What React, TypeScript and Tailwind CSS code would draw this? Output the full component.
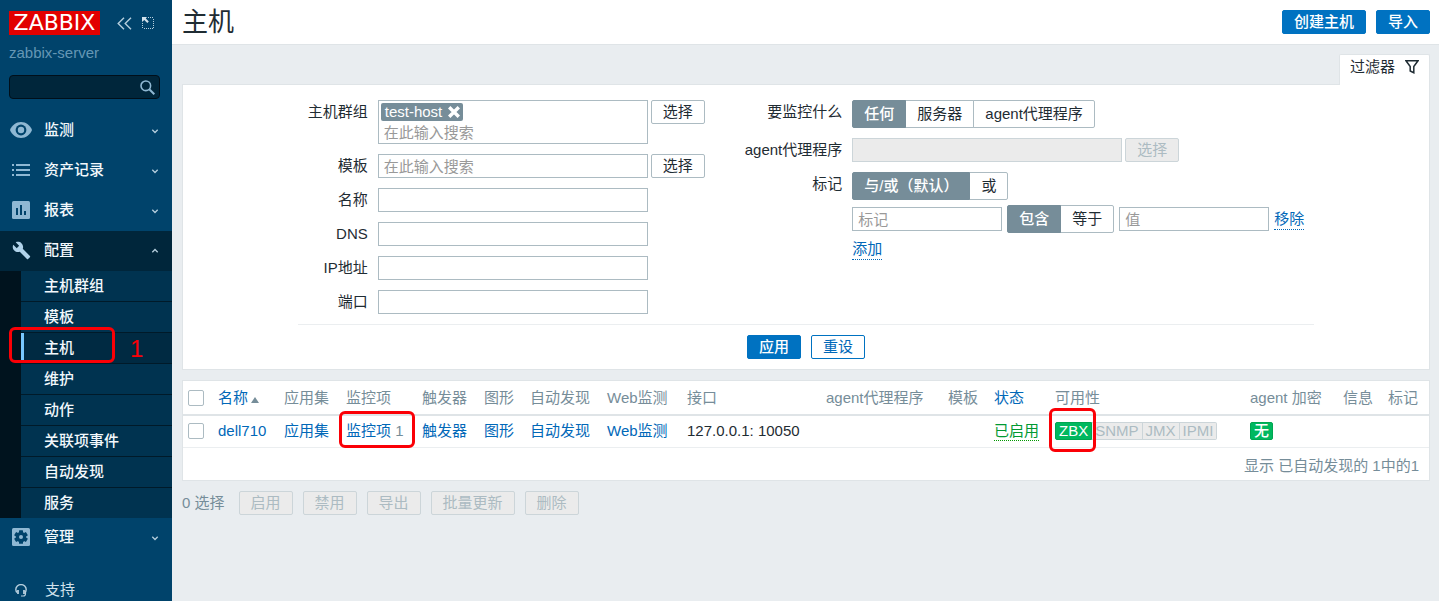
import { useState } from 'react'
import type { ReactNode } from 'react'

const subMenu = ['主机群组', '模板', '主机', '维护', '动作', '关联项事件', '自动发现', '服务']

const columns = [
  { label: '名称', width: 'w-[66px]', sort: true },
  { label: '应用集', width: 'w-[62px]' },
  { label: '监控项', width: 'w-[76px]' },
  { label: '触发器', width: 'w-[62px]' },
  { label: '图形', width: 'w-[46px]' },
  { label: '自动发现', width: 'w-[77px]' },
  { label: 'Web监测', width: 'w-[80px]' },
  { label: '接口', width: '' },
  { label: 'agent代理程序', width: 'w-[122px]' },
  { label: '模板', width: 'w-[46px]' },
  { label: '状态', width: 'w-[61px]', link: true },
  { label: '可用性', width: 'w-[195px]' },
  { label: 'agent 加密', width: 'w-[93px]' },
  { label: '信息', width: 'w-[45px]' },
  { label: '标记', width: 'w-[49px]' },
]

const fieldClass = 'h-6 border border-[#acbbc2] bg-white px-[5px] outline-none placeholder:text-[#999] placeholder:opacity-100'
const linkClass = 'text-[#0168b8]'

function EyeIcon() {
  return (
    <svg width="22" height="16" viewBox="0 0 22 16" fill="none">
      <path d="M11 0C6 0 1.800 3.300 0 8c1.800 4.700 6 8 11 8s9.200-3.300 11-8C20.200 3.300 16 0 11 0z" fill="#8fb8d3" />
      <circle cx="11" cy="8" r="5.400" fill="#00436b" />
      <circle cx="11" cy="8" r="3.200" fill="#8fb8d3" />
    </svg>
  )
}

function ListIcon() {
  return (
    <svg width="18" height="12" viewBox="0 0 18 12" fill="#8fb8d3">
      <path d="M0 0h2v2H0zM4 0h14v2H4zM0 5h2v2H0zM4 5h14v2H4zM0 10h2v2H0zM4 10h14v2H4z" />
    </svg>
  )
}

function ReportIcon() {
  return (
    <svg width="18" height="18" viewBox="0 0 18 18">
      <rect width="18" height="18" rx="1.500" fill="#8fb8d3" />
      <path d="M4 7h2v7H4zM8 4h2v10H8zM12 10h2v4h-2z" fill="#00436b" />
    </svg>
  )
}

function WrenchIcon() {
  return (
    <svg width="19" height="19" viewBox="0 0 24 24" fill="#b0d3ea">
      <path d="M22.700 19l-9.100-9.100c.9-2.300.4-5-1.500-6.900-2-2-5-2.400-7.400-1.300L9 6 6 9 1.600 4.700C.4 7.100.9 10.100 2.900 12.100c1.900 1.900 4.600 2.400 6.900 1.500l9.100 9.100c.4.4 1 .4 1.400 0l2.300-2.300c.5-.4.5-1.100.1-1.400z" />
    </svg>
  )
}

function AdminIcon() {
  return (
    <svg width="18" height="18" viewBox="0 0 18 18">
      <rect width="18" height="18" rx="1.500" fill="#8fb8d3" />
      <g fill="#00436b">
        <circle cx="9" cy="9" r="5.200" />
        <rect x="7" y="2.200" width="4" height="13.600" rx="0.600" />
        <rect x="7" y="2.200" width="4" height="13.600" rx="0.600" transform="rotate(60 9 9)" />
        <rect x="7" y="2.200" width="4" height="13.600" rx="0.600" transform="rotate(120 9 9)" />
      </g>
      <circle cx="9" cy="9" r="2" fill="#8fb8d3" />
    </svg>
  )
}

function SupportIcon() {
  return (
    <svg width="12" height="13" viewBox="0 0 12 13" fill="none" stroke="#b5cedd" strokeWidth="1.400">
      <path d="M2.200 8.500C1.200 7.800.8 6.700.8 5.600a5.200 5 0 0 1 10.400 0c0 1.100-.4 2.200-1.400 2.900" />
      <path d="M3 6v4M9 6v4" strokeWidth="1.800" />
      <path d="M10.500 8v1.800c0 1.400-.8 2.200-2.200 2.200H6" strokeWidth="1.200" />
    </svg>
  )
}

function Arrow({ up }: { up?: boolean }) {
  return (
    <svg className="mt-0.5 ml-auto" width="8" height="6" viewBox="0 0 8 6" fill="none" stroke="#b5cedd" strokeWidth="1.300">
      <path d={up ? 'M1.300 4.200L4 1.500l2.700 2.700' : 'M1.300 1.800L4 4.500l2.700-2.700'} />
    </svg>
  )
}

function MenuItem({ icon, label, open }: { icon: ReactNode; label: string; open?: boolean }) {
  return (
    <a href="#" className={`flex h-10 items-center pr-[13px] pb-0.5 font-medium text-[#f2f8fc] ${open ? 'bg-[#00263b]' : ''}`}>
      <span className="flex w-11 shrink-0 items-center">
        <span className="flex w-[42px] justify-center">{icon}</span>
      </span>
      {label}
      <Arrow up={open} />
    </a>
  )
}

function Sidebar() {
  return (
    <aside className="flex w-[172px] shrink-0 flex-col bg-[#00436b]">
      <div className="flex items-center pt-[11px] pl-[9px]">
        <a href="#" className="flex h-6 w-[91px] items-center justify-center bg-[#e20000] font-['DejaVu_Sans',sans-serif] text-[22px] leading-6 text-white">ZABBIX</a>
        <button className="ml-[17px]" aria-label="收起">
          <svg width="15" height="13" viewBox="0 0 15 13" fill="none" stroke="#b5cedd" strokeWidth="1.400">
            <path d="M7 0.800L1.200 6.500 7 12.200M14 0.800L8.200 6.500 14 12.200" />
          </svg>
        </button>
        <button className="ml-2.5" aria-label="隐藏">
          <svg width="12" height="12" viewBox="0 0 12 12" fill="none" stroke="#b5cedd">
            <path d="M6 .5h6M11.500 2v9M.5 6v6M2 11.500h10" strokeDasharray="1 1" />
            <path d="M0 0h5L3.800 1.500l3 3-1.500 1.500-3-3L0 5z" fill="#d2e2ec" stroke="none" />
          </svg>
        </button>
      </div>
      <div className="mt-2 pl-[9px] leading-5 text-[#6597b5]">zabbix-server</div>
      <div className="relative mt-3 mr-3 ml-[9px]">
        <input aria-label="搜索" className="h-6 w-full rounded-sm border border-[#000f1a] bg-[#00263b] pr-7 pl-2 text-white outline-none" />
        <button className="absolute top-[5px] right-[5px]" aria-label="开始搜索">
          <svg width="15" height="15" viewBox="0 0 15 15" fill="none" stroke="#8fb8d3" strokeWidth="1.600">
            <circle cx="5.800" cy="5.800" r="4.800" />
            <path d="M9.300 9.300l5 5" strokeWidth="2" />
          </svg>
        </button>
      </div>
      <nav className="mt-3">
        <MenuItem icon={<EyeIcon />} label="监测" />
        <MenuItem icon={<ListIcon />} label="资产记录" />
        <MenuItem icon={<ReportIcon />} label="报表" />
        <MenuItem icon={<WrenchIcon />} label="配置" open />
        <ul className="bg-[#00131e] pl-[21px]">
          {subMenu.map(item => (
            <li key={item} className="relative border-b border-[#001a29] last:border-b-0">
              <a
                href="#"
                className={`flex h-[30px] items-center font-medium text-[#f2f8fc] ${
                  item === '主机' ? 'border-l-3 border-[#78c8ff] bg-[#002a42] pl-5' : 'bg-[#003350] pl-[23px]'
                }`}
              >
                {item}
              </a>
              {item === '主机' && (
                <>
                  <span className="pointer-events-none absolute -top-1.5 -left-3 h-9 w-[106px] rounded-md border-3 border-[#fb0006]" />
                  <span className="absolute top-0 left-[109px] text-2xl leading-8 text-[#fb0006]">1</span>
                </>
              )}
            </li>
          ))}
        </ul>
        <MenuItem icon={<AdminIcon />} label="管理" />
      </nav>
      <a href="#" className="mt-3 flex h-10 items-center text-[#d2e2ec]">
        <span className="flex w-[45px] pl-[15px]"><SupportIcon /></span>
        支持
      </a>
    </aside>
  )
}

function Button({ children, kind = 'plain', disabled }: { children: ReactNode; kind?: 'primary' | 'outline' | 'plain'; disabled?: boolean }) {
  const look = disabled
    ? 'border-[#ccd5d9] bg-[#ebebeb] text-[#acbbc2]'
    : kind === 'primary'
      ? 'border-[#0072c1] bg-[#0072c1] font-medium text-white'
      : kind === 'outline'
        ? 'border-[#0072c1] bg-white text-[#0168b8]'
        : 'border-[#acbbc2] bg-white'
  return (
    <button type="button" disabled={disabled} className={`flex h-6 shrink-0 items-center rounded-xs border px-[11px] leading-5 ${look}`}>
      {children}
    </button>
  )
}

function Segmented({ name, options }: { name: string; options: string[] }) {
  const [value, setValue] = useState(options[0])
  return (
    <div className="flex">
      {options.map(option => (
        <label
          key={option}
          className={`-ml-px flex h-7 items-center border px-[11px] first:ml-0 first:rounded-l-xs last:rounded-r-xs ${
            value === option ? 'z-10 border-[#768d99] bg-[#768d99] font-medium text-white' : 'border-[#acbbc2] bg-white'
          }`}
        >
          <input type="radio" name={name} className="sr-only" checked={value === option} onChange={() => setValue(option)} />
          {option}
        </label>
      ))}
    </div>
  )
}

function Row({ label, id, children }: { label: string; id?: string; children: ReactNode }) {
  return (
    <div className="flex gap-2.5">
      <label htmlFor={id} className="w-full flex-1 text-right leading-6 whitespace-nowrap">{label}</label>
      {children}
    </div>
  )
}

function Filter() {
  return (
    <form className="mx-auto w-fit pt-[15px]">
      <div className="flex items-start gap-10 px-2.5 pb-2.5">
        <div className="flex flex-col gap-2.5">
          <Row label="主机群组" id="groups">
            <div className="flex w-[327px] items-start gap-[3px]">
              <div className="h-11 w-[270px] border border-[#acbbc2] px-0.5 pt-0.5">
                <span className="flex h-[18px] w-fit items-center gap-1.5 rounded-xs bg-[#768d99] pr-[3px] pl-1 text-white">
                  test-host
                  <button type="button" aria-label="移除">
                    <svg width="12" height="12" viewBox="0 0 12 12" stroke="#fff" strokeWidth="3.400">
                      <path d="M1.200 1.200l9.600 9.600M10.800 1.200l-9.600 9.600" />
                    </svg>
                  </button>
                </span>
                <input id="groups" placeholder="在此输入搜索" className="block h-[22px] w-full px-[3px] outline-none placeholder:text-[#999] placeholder:opacity-100" />
              </div>
              <Button>选择</Button>
            </div>
          </Row>
          <Row label="模板" id="templates">
            <div className="flex w-[327px] gap-[3px]">
              <input id="templates" placeholder="在此输入搜索" className={`w-[270px] ${fieldClass}`} />
              <Button>选择</Button>
            </div>
          </Row>
          {['名称', 'DNS', 'IP地址', '端口'].map(label => (
            <Row key={label} label={label} id={label}>
              <div className="w-[327px]">
                <input id={label} className={`block w-[270px] ${fieldClass}`} />
              </div>
            </Row>
          ))}
        </div>
        <div className="flex flex-col gap-2.5">
          <Row label="要监控什么">
            <div className="w-[452px]">
              <Segmented name="monitored" options={['任何', '服务器', 'agent代理程序']} />
            </div>
          </Row>
          <Row label="agent代理程序" id="proxy">
            <div className="flex w-[452px] gap-[3px]">
              <input id="proxy" disabled className="h-6 w-[270px] border border-[#ccd5d9] bg-[#ebebeb]" />
              <Button disabled>选择</Button>
            </div>
          </Row>
          <Row label="标记">
            <div className="w-[452px]">
              <Segmented name="evaltype" options={['与/或（默认）', '或']} />
              <div className="mt-[5px] flex items-center gap-[5px]">
                <input aria-label="标记" placeholder="标记" className={`w-[150px] ${fieldClass}`} />
                <Segmented name="operator" options={['包含', '等于']} />
                <input aria-label="值" placeholder="值" className={`w-[150px] ${fieldClass}`} />
                <button type="button" className={`border-b border-dotted border-[#0168b8] leading-5 ${linkClass}`}>移除</button>
              </div>
              <button type="button" className={`mt-1.5 border-b border-dotted border-[#0168b8] leading-5 ${linkClass}`}>添加</button>
            </div>
          </Row>
        </div>
      </div>
      <div className="flex justify-center gap-2.5 border-t border-[#ebeef0] py-2.5">
        <Button kind="primary">应用</Button>
        <Button kind="outline">重设</Button>
      </div>
    </form>
  )
}

function Checkbox({ label }: { label: string }) {
  return (
    <input
      type="checkbox"
      aria-label={label}
      className="block size-4 appearance-none rounded-xs border border-[#acbbc2] bg-white checked:bg-[#0072c1]"
    />
  )
}

function HostTable() {
  return (
    <div className="border border-[#dfe4e7] bg-white">
      <table className="w-full table-fixed border-collapse text-left whitespace-nowrap">
        <thead>
          <tr className="h-[34px] border-b-2 border-[#dfe4e7] text-[#768d99]">
            <th className="w-[27px] pl-[5px]"><Checkbox label="全选" /></th>
            {columns.map((col, i) => (
              <th key={i} className={`pl-2 font-normal ${col.width}`}>
                {col.sort ? (
                  <a href="#" className={`flex items-center gap-[3px] ${linkClass}`}>
                    {col.label}
                    <svg className="mt-1" width="8" height="6" viewBox="0 0 8 6" fill="#768d99"><path d="M4 0l4 6H0z" /></svg>
                  </a>
                ) : col.link ? (
                  <a href="#" className={linkClass}>{col.label}</a>
                ) : (
                  col.label
                )}
              </th>
            ))}
          </tr>
        </thead>
        <tbody>
          <tr className="h-8 border-b border-[#ebeef0]">
            <td className="pl-[5px]"><Checkbox label="dell710" /></td>
            <td className="pl-2"><a href="#" className={linkClass}>dell710</a></td>
            <td className="pl-2"><a href="#" className={linkClass}>应用集</a></td>
            <td className="relative pl-2">
              <a href="#" className={linkClass}>监控项</a> <span className="text-[#768d99]">1</span>
              <span className="pointer-events-none absolute -top-[5px] left-px h-[37px] w-[76px] rounded-md border-3 border-[#fb0006]" />
            </td>
            <td className="pl-2"><a href="#" className={linkClass}>触发器</a></td>
            <td className="pl-2"><a href="#" className={linkClass}>图形</a></td>
            <td className="pl-2"><a href="#" className={linkClass}>自动发现</a></td>
            <td className="pl-2"><a href="#" className={linkClass}>Web监测</a></td>
            <td className="pl-2">127.0.0.1: 10050</td>
            <td />
            <td />
            <td className="pl-2">
              <button className="border-b border-dotted border-[#009900] leading-[18px] text-[#009933]">已启用</button>
            </td>
            <td className="relative pl-2">
              <div className="flex h-[18px] leading-4 text-[#acbbc2]">
                <span className="rounded-l-xs border border-[#00a651] bg-[#00b85f] px-[3px] text-white">ZBX</span>
                {['SNMP', 'JMX', 'IPMI'].map(name => (
                  <span key={name} className="border border-l-0 border-[#ccd5d9] bg-[#ebebeb] px-[3px] last:rounded-r-xs">{name}</span>
                ))}
              </div>
              <span className="pointer-events-none absolute -top-[8px] left-0.5 h-11 w-[47px] rounded-md border-3 border-[#fb0006]" />
            </td>
            <td className="pl-2">
              <span className="flex h-[18px] w-fit items-center rounded-xs border border-[#00a651] bg-[#00b85f] px-[3px] font-medium text-white">无</span>
            </td>
            <td />
            <td />
          </tr>
        </tbody>
      </table>
      <div className="flex h-8 items-center justify-end pt-1 pr-2.5 text-[#768d99]">显示 已自动发现的 1中的1</div>
    </div>
  )
}

export default function App() {
  return (
    <div className="flex min-h-screen bg-[#e9edf0] font-['Liberation_Sans','Noto_Sans_CJK_SC',sans-serif] text-[15px] leading-5 text-[#1f2c33]">
      <Sidebar />
      <div className="min-w-0 flex-1">
        <header className="flex h-[45px] items-center justify-between border-b border-[#dfe4e7] bg-white pr-[9px] pl-2.5">
          <h1 className="text-[26px] leading-8">主机</h1>
          <div className="flex gap-2.5">
            <Button kind="primary">创建主机</Button>
            <Button kind="primary">导入</Button>
          </div>
        </header>
        <main className="pt-[9px] pr-[9px] pl-2.5">
          <div className="flex justify-end">
            <a href="#" className="relative z-10 -mb-px flex h-[31px] items-center gap-2.5 rounded-t-xs border border-b-0 border-[#dfe4e7] bg-white px-2.5 pb-1.5">
              过滤器
              <svg width="14" height="14" viewBox="0 0 14 14" fill="none" stroke="#1f2c33" strokeWidth="1.500">
                <path d="M1 .8h12L8.800 6.500v6.200L5.200 11V6.500z" />
              </svg>
            </a>
          </div>
          <section className="border border-[#dfe4e7] bg-white">
            <Filter />
          </section>
          <section className="mt-2.5">
            <HostTable />
          </section>
          <div className="mt-2.5 flex items-center gap-2.5">
            <span className="mr-1 text-[#768d99]">0 选择</span>
            {['启用', '禁用', '导出', '批量更新', '删除'].map(action => (
              <Button key={action} disabled>{action}</Button>
            ))}
          </div>
        </main>
      </div>
    </div>
  )
}
